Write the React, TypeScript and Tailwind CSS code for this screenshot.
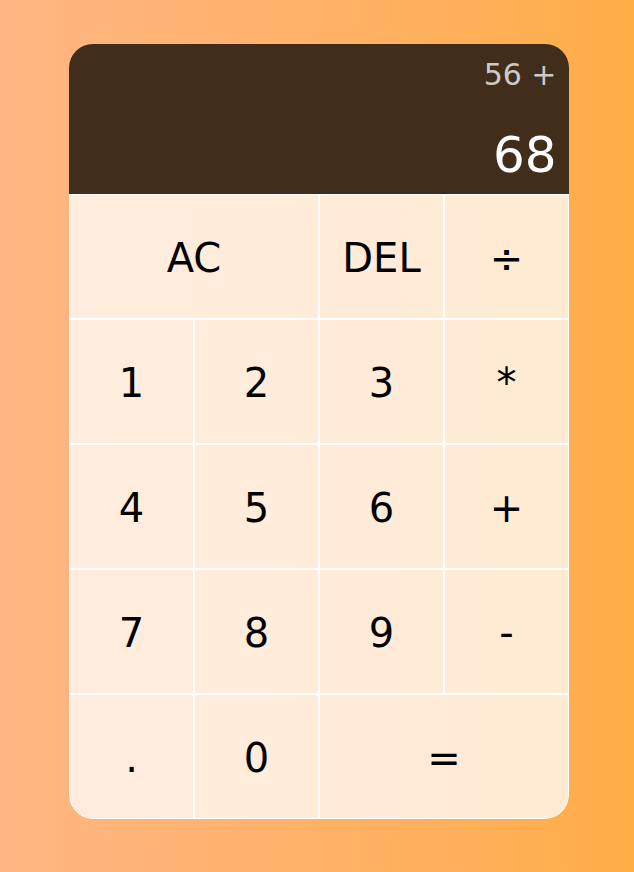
import React from 'react';

const keys: { label: string; wide?: boolean; corner?: 'bl' | 'br' }[] = [
  { label: 'AC', wide: true },
  { label: 'DEL' },
  { label: '÷' },
  { label: '1' },
  { label: '2' },
  { label: '3' },
  { label: '*' },
  { label: '4' },
  { label: '5' },
  { label: '6' },
  { label: '+' },
  { label: '7' },
  { label: '8' },
  { label: '9' },
  { label: '-' },
  { label: '.', corner: 'bl' },
  { label: '0' },
  { label: '=', wide: true, corner: 'br' },
];

export default function App() {
  return (
    <div
      className="flex min-h-screen justify-center bg-gradient-to-r from-[#ffb683] to-[#ffad45] pt-[44px] pl-[4px]"
      style={{ fontFamily: '"DejaVu Sans", Verdana, sans-serif' }}
    >
      <div className="grid h-fit w-[500px] grid-cols-[repeat(4,125px)] grid-rows-[150px_repeat(5,125px)] overflow-hidden rounded-[24px]">
        <div className="col-span-4 flex flex-col items-end justify-between break-all bg-[#402d1b] px-[12.5px] pt-[12.5px] pb-[10.5px]">
          <div className="text-[30px] leading-[normal] text-white/75">56 +</div>
          <div className="text-[50px] leading-[normal] text-white">68</div>
        </div>
        {keys.map((k) => (
          <button
            key={k.label}
            type="button"
            className={
              'cursor-pointer border border-white bg-white/75 pt-[2px] text-[40px] text-black outline-none ' +
              (k.wide ? 'col-span-2 ' : '') +
              (k.corner === 'bl' ? 'rounded-bl-[24px] ' : '') +
              (k.corner === 'br' ? 'rounded-br-[24px] ' : '')
            }
          >
            {k.label}
          </button>
        ))}
      </div>
    </div>
  );
}
